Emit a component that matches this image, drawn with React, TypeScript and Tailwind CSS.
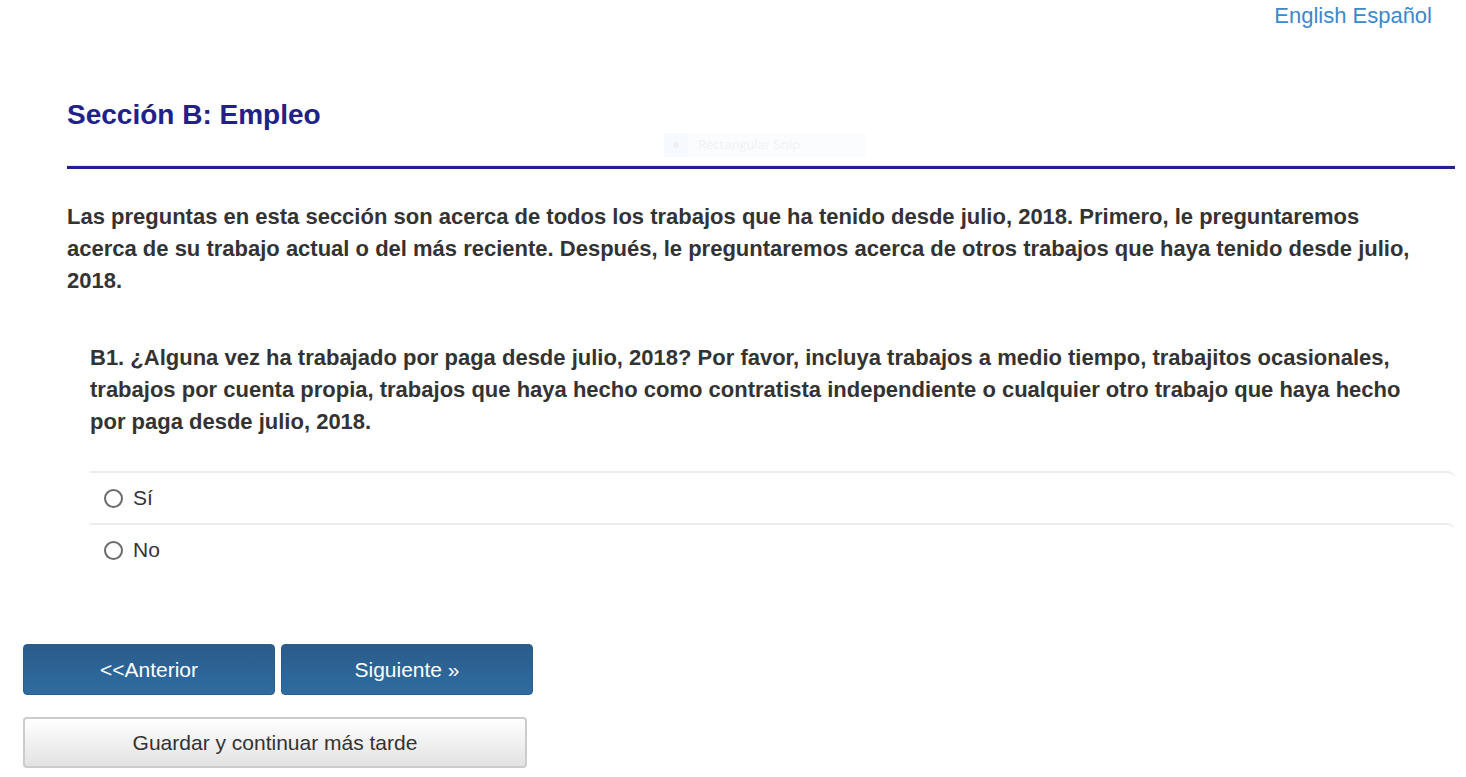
export default function App() {
  return (
    <div className="relative min-h-[777px] w-[1466px] bg-white font-['Liberation_Sans',Arial,sans-serif] text-[#333]">
      {/* language links */}
      <div className="flex justify-end pr-[34px] pt-[2px] text-[22px] leading-[28px] text-[#3c88cc]">
        <a className="cursor-pointer">English</a>
        <a className="ml-[6px] cursor-pointer">Español</a>
      </div>

      {/* faint screen-capture ghost */}
      <div className="absolute left-[664px] top-[133px] flex h-[24px] w-[202px] items-center bg-[#fbfcfe]">
        <div className="flex h-[24px] w-[24px] items-center justify-center bg-[#f6f9fd]">
          <span className="h-[6px] w-[6px] rounded-full bg-[#f3eeee]" />
        </div>
        <span className="ml-[10px] font-['Open_Sans',sans-serif] text-[13px] text-[#f1f2f4]">Rectangular Snip</span>
      </div>

      <div className="ml-[67px] mr-[11px]">
        <h1 className="mt-[69px] text-[28px] font-bold leading-[32px] text-[#22208a]">Sección B: Empleo</h1>
        <div className="mt-[34px] h-[1px] bg-[#ececec]" />
        <div className="h-[3px] bg-[#22208a]" />

        <p className="mt-[32px] w-[1355px] text-[22px] font-bold leading-[32px] text-[#333]">
          Las preguntas en esta sección son acerca de todos los trabajos que ha tenido desde julio, 2018. Primero, le preguntaremos acerca de su trabajo actual o del más reciente. Después, le preguntaremos acerca de otros trabajos que haya tenido desde julio, 2018.
        </p>

        <div className="ml-[23px]">
          <p className="mt-[45px] w-[1330px] text-[22px] font-bold leading-[32px] text-[#333]">
            B1. ¿Alguna vez ha trabajado por paga desde julio, 2018? Por favor, incluya trabajos a medio tiempo, trabajitos ocasionales, trabajos por cuenta propia, trabajos que haya hecho como contratista independiente o cualquier otro trabajo que haya hecho por paga desde julio, 2018.
          </p>

          <div className="mt-[33px]">
            {['Sí', 'No'].map(label => (
              <label key={label} className="flex h-[52px] cursor-pointer items-center rounded-tr-[8px] border-t-2 border-[#ececec] pl-[14px]">
                <span className="h-[19px] w-[19px] rounded-full border-2 border-[#6b6b6b] bg-white" />
                <span className="ml-[10px] text-[21px] leading-[24px] text-[#333]">{label}</span>
              </label>
            ))}
          </div>
        </div>
      </div>

      <div className="ml-[23px] mt-[69px] flex gap-[6px]">
        <button className="h-[51px] w-[252px] rounded-[4px] border border-[#285e8c] bg-gradient-to-b from-[#2a5c8a] to-[#2f6ca0] text-[21px] text-white">
          &lt;&lt;Anterior
        </button>
        <button className="h-[51px] w-[252px] rounded-[4px] border border-[#285e8c] bg-gradient-to-b from-[#2a5c8a] to-[#2f6ca0] text-[21px] text-white">
          Siguiente »
        </button>
      </div>

      <div className="ml-[23px] mt-[22px] pb-[8px]">
        <button className="h-[51px] w-[504px] rounded-[4px] border-2 border-[#cccccc] bg-gradient-to-b from-[#ffffff] to-[#e2e2e2] text-[21px] text-[#333]">
          Guardar y continuar más tarde
        </button>
      </div>
    </div>
  )
}
